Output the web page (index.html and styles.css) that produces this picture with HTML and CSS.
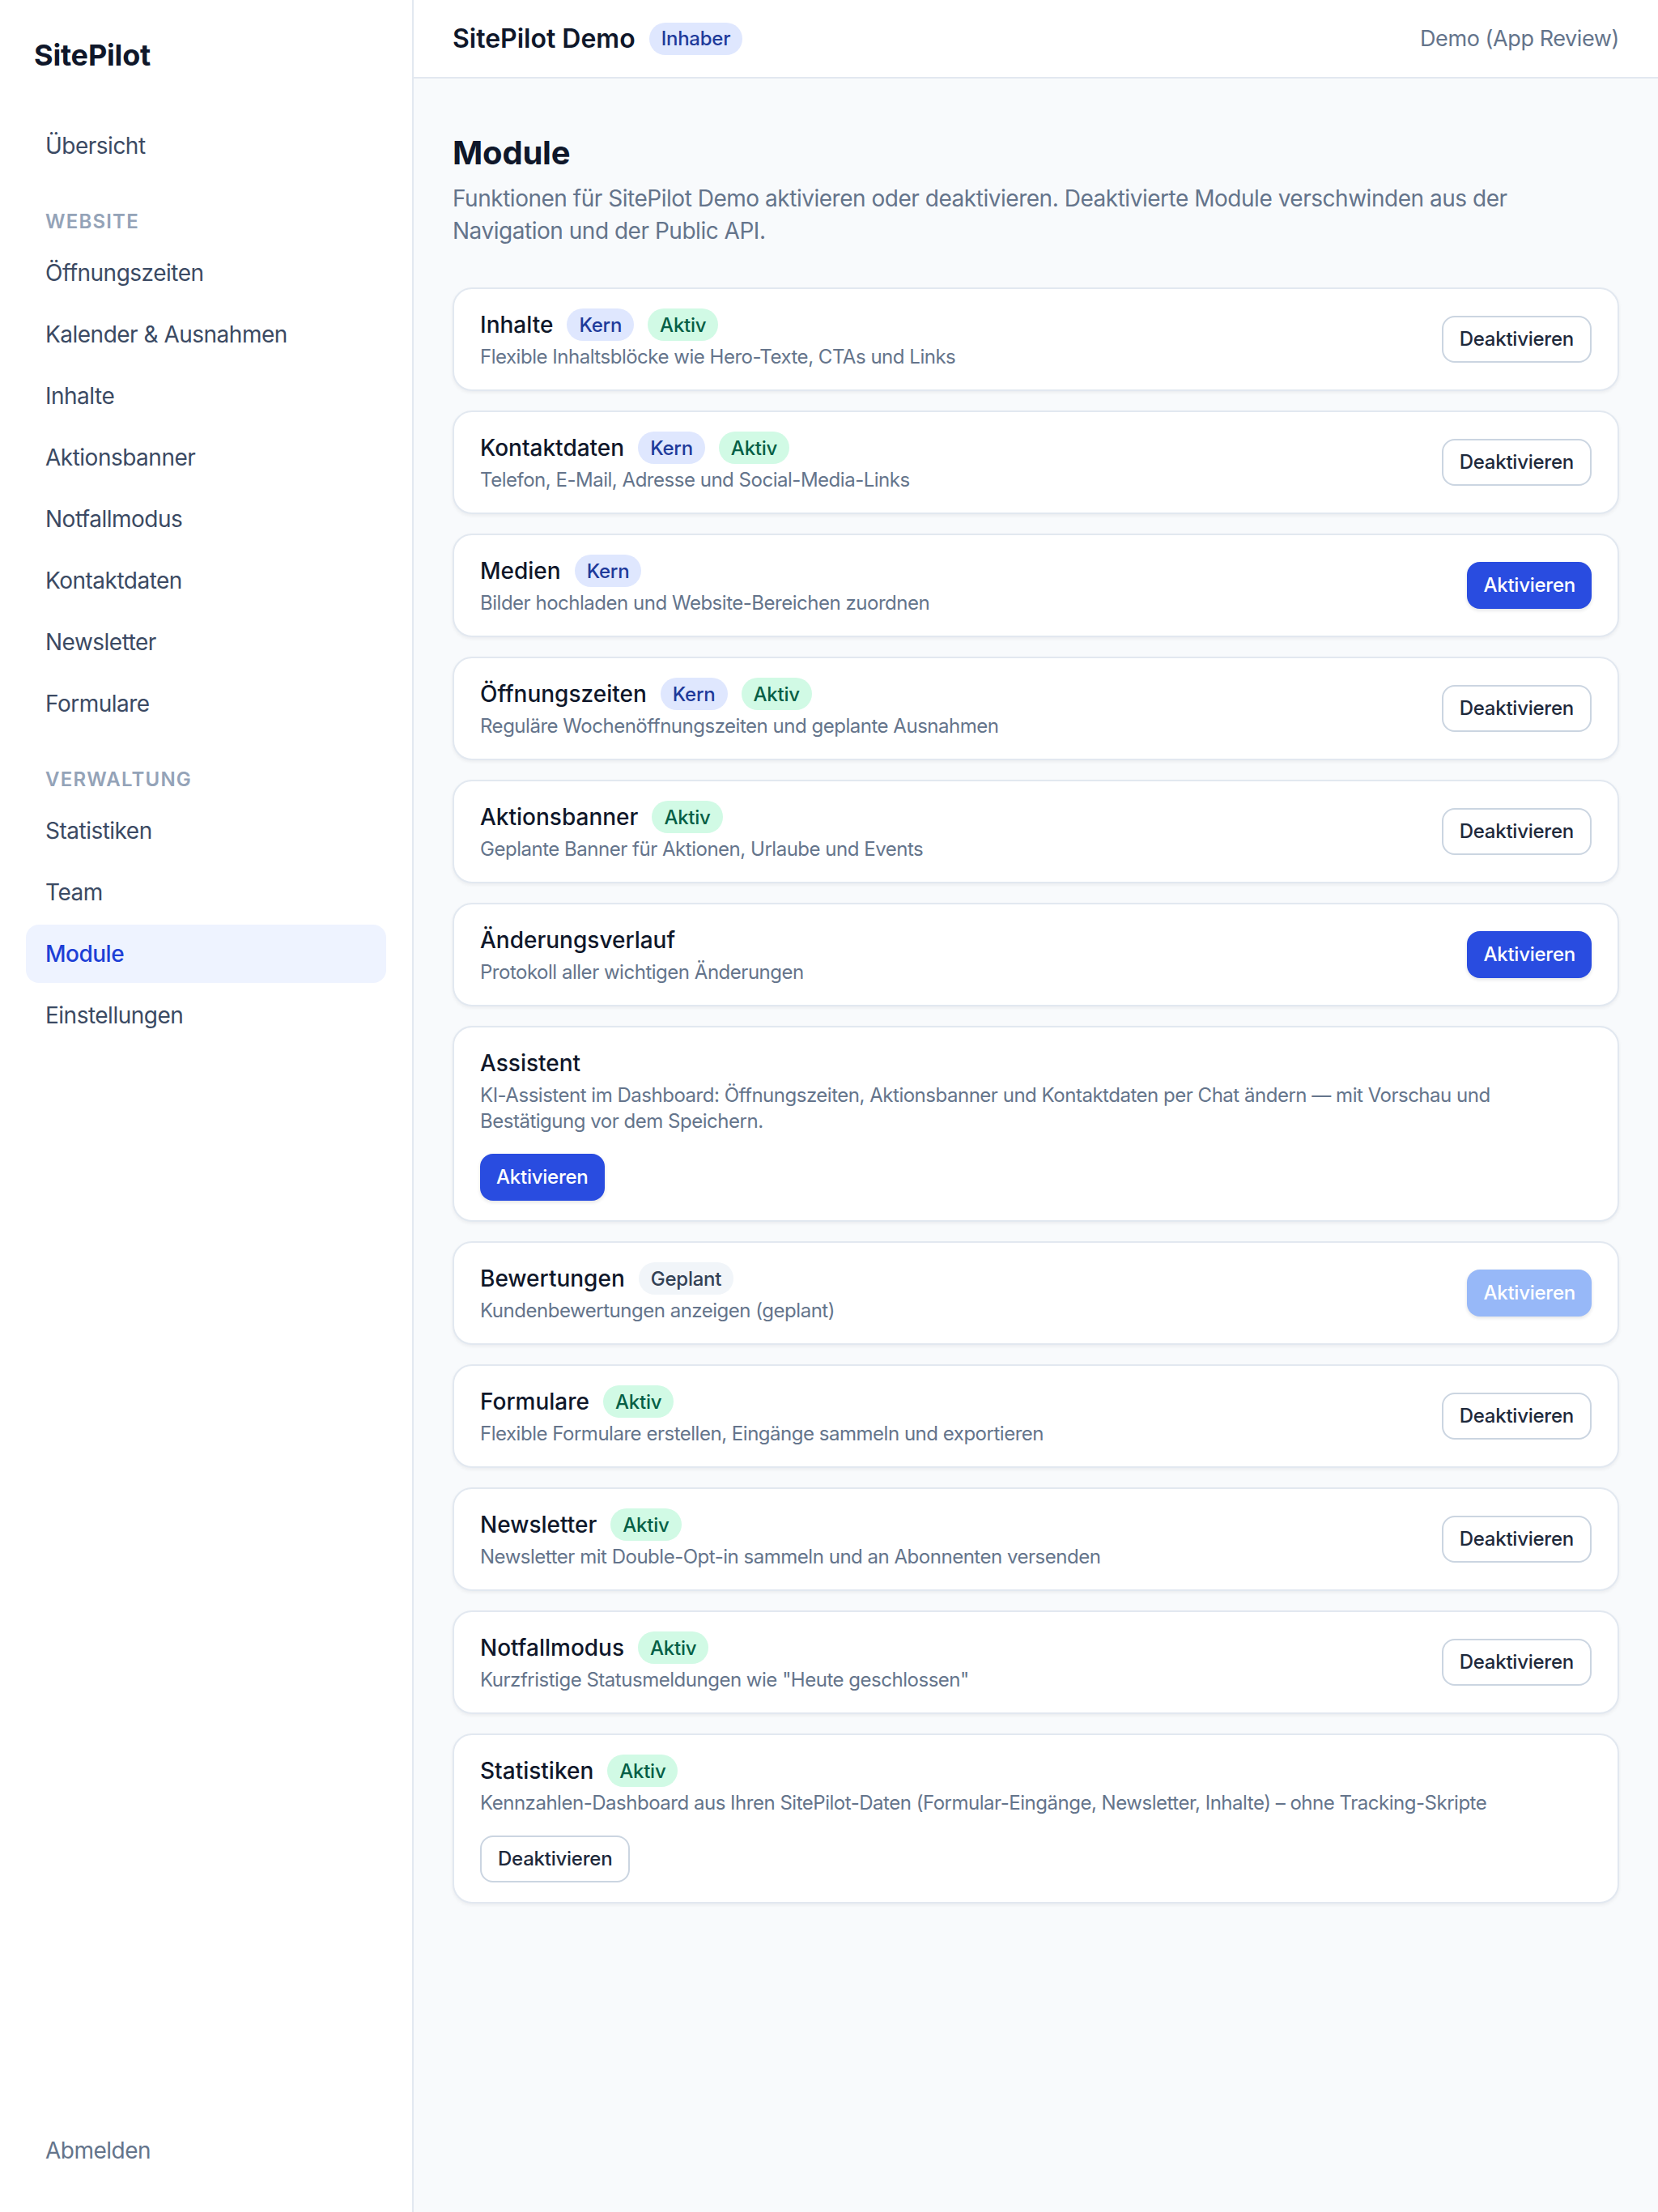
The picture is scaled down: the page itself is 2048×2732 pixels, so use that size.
FILE: index.html
```html
<!DOCTYPE html>
<html lang="de">
<head>
<meta charset="utf-8">
<title>Module – SitePilot</title>
<link rel="stylesheet" href="styles.css">
</head>
<body>
<div class="app">
  <aside class="sidebar">
    <div class="logo">SitePilot</div>
    <nav class="nav">
      <a class="nav-item">Übersicht</a>
      <div class="nav-label">Website</div>
      <a class="nav-item">Öffnungszeiten</a>
      <a class="nav-item">Kalender &amp; Ausnahmen</a>
      <a class="nav-item">Inhalte</a>
      <a class="nav-item">Aktionsbanner</a>
      <a class="nav-item">Notfallmodus</a>
      <a class="nav-item">Kontaktdaten</a>
      <a class="nav-item">Newsletter</a>
      <a class="nav-item">Formulare</a>
      <div class="nav-label">Verwaltung</div>
      <a class="nav-item">Statistiken</a>
      <a class="nav-item">Team</a>
      <a class="nav-item active">Module</a>
      <a class="nav-item">Einstellungen</a>
    </nav>
    <a class="nav-item logout">Abmelden</a>
  </aside>

  <div class="main">
    <header class="topbar">
      <div class="topbar-left">
        <span class="site-name">SitePilot Demo</span>
        <span class="badge badge-blue">Inhaber</span>
      </div>
      <div class="topbar-right">Demo (App Review)</div>
    </header>

    <main class="content">
      <h1 class="page-title">Module</h1>
      <p class="page-sub">Funktionen für SitePilot Demo aktivieren oder deaktivieren. Deaktivierte Module verschwinden aus der Navigation und der Public API.</p>

      <div class="modules">
        <section class="card">
          <div class="card-body">
            <div class="card-head"><span class="card-title">Inhalte</span><span class="badge badge-blue">Kern</span><span class="badge badge-green">Aktiv</span></div>
            <p class="card-desc">Flexible Inhaltsblöcke wie Hero-Texte, CTAs und Links</p>
          </div>
          <button class="btn btn-outline">Deaktivieren</button>
        </section>

        <section class="card">
          <div class="card-body">
            <div class="card-head"><span class="card-title">Kontaktdaten</span><span class="badge badge-blue">Kern</span><span class="badge badge-green">Aktiv</span></div>
            <p class="card-desc">Telefon, E-Mail, Adresse und Social-Media-Links</p>
          </div>
          <button class="btn btn-outline">Deaktivieren</button>
        </section>

        <section class="card">
          <div class="card-body">
            <div class="card-head"><span class="card-title">Medien</span><span class="badge badge-blue">Kern</span></div>
            <p class="card-desc">Bilder hochladen und Website-Bereichen zuordnen</p>
          </div>
          <button class="btn btn-primary">Aktivieren</button>
        </section>

        <section class="card">
          <div class="card-body">
            <div class="card-head"><span class="card-title">Öffnungszeiten</span><span class="badge badge-blue">Kern</span><span class="badge badge-green">Aktiv</span></div>
            <p class="card-desc">Reguläre Wochenöffnungszeiten und geplante Ausnahmen</p>
          </div>
          <button class="btn btn-outline">Deaktivieren</button>
        </section>

        <section class="card">
          <div class="card-body">
            <div class="card-head"><span class="card-title">Aktionsbanner</span><span class="badge badge-green">Aktiv</span></div>
            <p class="card-desc">Geplante Banner für Aktionen, Urlaube und Events</p>
          </div>
          <button class="btn btn-outline">Deaktivieren</button>
        </section>

        <section class="card">
          <div class="card-body">
            <div class="card-head"><span class="card-title">Änderungsverlauf</span></div>
            <p class="card-desc">Protokoll aller wichtigen Änderungen</p>
          </div>
          <button class="btn btn-primary">Aktivieren</button>
        </section>

        <section class="card card-stacked">
          <div class="card-body">
            <div class="card-head"><span class="card-title">Assistent</span></div>
            <p class="card-desc">KI-Assistent im Dashboard: Öffnungszeiten, Aktionsbanner und Kontaktdaten per Chat ändern — mit Vorschau und Bestätigung vor dem Speichern.</p>
          </div>
          <div class="card-actions"><button class="btn btn-primary">Aktivieren</button></div>
        </section>

        <section class="card">
          <div class="card-body">
            <div class="card-head"><span class="card-title">Bewertungen</span><span class="badge badge-gray">Geplant</span></div>
            <p class="card-desc">Kundenbewertungen anzeigen (geplant)</p>
          </div>
          <button class="btn btn-primary" disabled>Aktivieren</button>
        </section>

        <section class="card">
          <div class="card-body">
            <div class="card-head"><span class="card-title">Formulare</span><span class="badge badge-green">Aktiv</span></div>
            <p class="card-desc">Flexible Formulare erstellen, Eingänge sammeln und exportieren</p>
          </div>
          <button class="btn btn-outline">Deaktivieren</button>
        </section>

        <section class="card">
          <div class="card-body">
            <div class="card-head"><span class="card-title">Newsletter</span><span class="badge badge-green">Aktiv</span></div>
            <p class="card-desc">Newsletter mit Double-Opt-in sammeln und an Abonnenten versenden</p>
          </div>
          <button class="btn btn-outline">Deaktivieren</button>
        </section>

        <section class="card">
          <div class="card-body">
            <div class="card-head"><span class="card-title">Notfallmodus</span><span class="badge badge-green">Aktiv</span></div>
            <p class="card-desc">Kurzfristige Statusmeldungen wie "Heute geschlossen"</p>
          </div>
          <button class="btn btn-outline">Deaktivieren</button>
        </section>

        <section class="card card-stacked">
          <div class="card-body">
            <div class="card-head"><span class="card-title">Statistiken</span><span class="badge badge-green">Aktiv</span></div>
            <p class="card-desc">Kennzahlen-Dashboard aus Ihren SitePilot-Daten (Formular-Eingänge, Newsletter, Inhalte) – ohne Tracking-Skripte</p>
          </div>
          <div class="card-actions"><button class="btn btn-outline">Deaktivieren</button></div>
        </section>
      </div>
    </main>
  </div>
</div>
</body>
</html>
```

FILE: styles.css
```css
* { box-sizing: border-box; }

html, body {
  margin: 0;
  padding: 0;
}

body {
  font-family: Inter, "Noto Sans", "Liberation Sans", sans-serif;
  color: #0f172a;
  background: #f8fafc;
  -webkit-font-smoothing: antialiased;
}

.app {
  display: flex;
  min-height: 100vh;
}

/* Sidebar */
.sidebar {
  width: 511px;
  flex-shrink: 0;
  height: 100vh;
  background: #ffffff;
  border-right: 2px solid #e2e8f0;
  padding: 40px 32px 40px 32px;
  display: flex;
  flex-direction: column;
}

.logo {
  font-size: 36px;
  line-height: 56px;
  font-weight: 700;
  letter-spacing: -0.005em;
  color: #0f172a;
  padding-left: 10px;
}

.nav {
  margin-top: 48px;
  display: flex;
  flex-direction: column;
  gap: 4px;
}

.nav-item {
  display: block;
  height: 72px;
  padding: 16px 24px;
  font-size: 28px;
  line-height: 40px;
  color: #3b4a63;
  border-radius: 16px;
  letter-spacing: -0.018em;
}

.nav-item.active {
  background: #eef3ff;
  color: #1d3fd6;
  font-weight: 500;
}

.nav-label {
  margin: 34px 0 3px;
  padding: 0 24px;
  font-size: 24px;
  line-height: 40px;
  font-weight: 600;
  letter-spacing: 0.05em;
  text-transform: uppercase;
  color: #94a3b8;
}

.logout {
  margin-top: auto;
  color: #64748b;
}

/* Main */
.main {
  flex: 1;
  min-width: 0;
  display: flex;
  flex-direction: column;
}

.topbar {
  height: 97px;
  background: #ffffff;
  border-bottom: 2px solid #e2e8f0;
  padding: 0 48px;
  display: flex;
  align-items: center;
  justify-content: space-between;
}

.topbar-left {
  display: flex;
  align-items: center;
  gap: 17px;
}

.site-name {
  font-size: 32px;
  font-weight: 600;
  letter-spacing: 0;
  color: #0f172a;
}

.topbar-right {
  font-size: 27px;
  letter-spacing: -0.015em;
  color: #64748b;
}

.content {
  padding: 64px 48px 64px;
}

.page-title {
  margin: 0;
  font-size: 40px;
  line-height: 56px;
  font-weight: 700;
  letter-spacing: -0.005em;
  color: #0f172a;
}

.page-sub {
  margin: 8px 0 0;
  font-size: 28px;
  line-height: 40px;
  letter-spacing: -0.017em;
  color: #64748b;
}

.modules {
  margin-top: 50px;
  display: flex;
  flex-direction: column;
  gap: 24px;
}

.card {
  background: #ffffff;
  border: 2px solid #e2e8f0;
  border-radius: 24px;
  box-shadow: 0 2px 4px rgba(15, 23, 42, 0.06);
  padding: 24px 32px;
  display: flex;
  align-items: center;
  justify-content: space-between;
  gap: 32px;
}

.card-stacked {
  display: block;
}

.card-body {
  min-width: 0;
}

.card-head {
  display: flex;
  align-items: center;
  gap: 17px;
  min-height: 40px;
}

.card-title {
  font-size: 28px;
  line-height: 40px;
  font-weight: 500;
  letter-spacing: 0;
  color: #0f172a;
}

.card-desc {
  margin: 4px 0 0;
  font-size: 24px;
  line-height: 32px;
  letter-spacing: -0.02em;
  color: #64748b;
}

.card-actions {
  margin-top: 24px;
  display: flex;
}

.badge {
  display: inline-flex;
  align-items: center;
  height: 40px;
  padding: 0 15px;
  border-radius: 999px;
  font-size: 24px;
  font-weight: 500;
  letter-spacing: -0.01em;
}

.badge-blue {
  background: #dfe7fe;
  color: #1e3a9a;
}

.badge-green {
  background: #d1fae5;
  color: #065f46;
}

.badge-gray {
  background: #f1f5f9;
  color: #334155;
}

.btn {
  flex-shrink: 0;
  font-family: inherit;
  font-size: 24px;
  line-height: 28px;
  font-weight: 500;
  letter-spacing: -0.01em;
  padding: 13px 20px;
  border-radius: 16px;
  border: 2px solid transparent;
  cursor: pointer;
}

.btn-outline {
  background: #ffffff;
  border-color: #cbd5e1;
  color: #1e293b;
}

.btn-primary {
  padding: 13px 18px;
  background: #294ce0;
  color: #ffffff;
  box-shadow: 0 2px 4px rgba(15, 23, 42, 0.12);
}

.btn-primary:disabled {
  background: #97b8f8;
  cursor: default;
}
```
